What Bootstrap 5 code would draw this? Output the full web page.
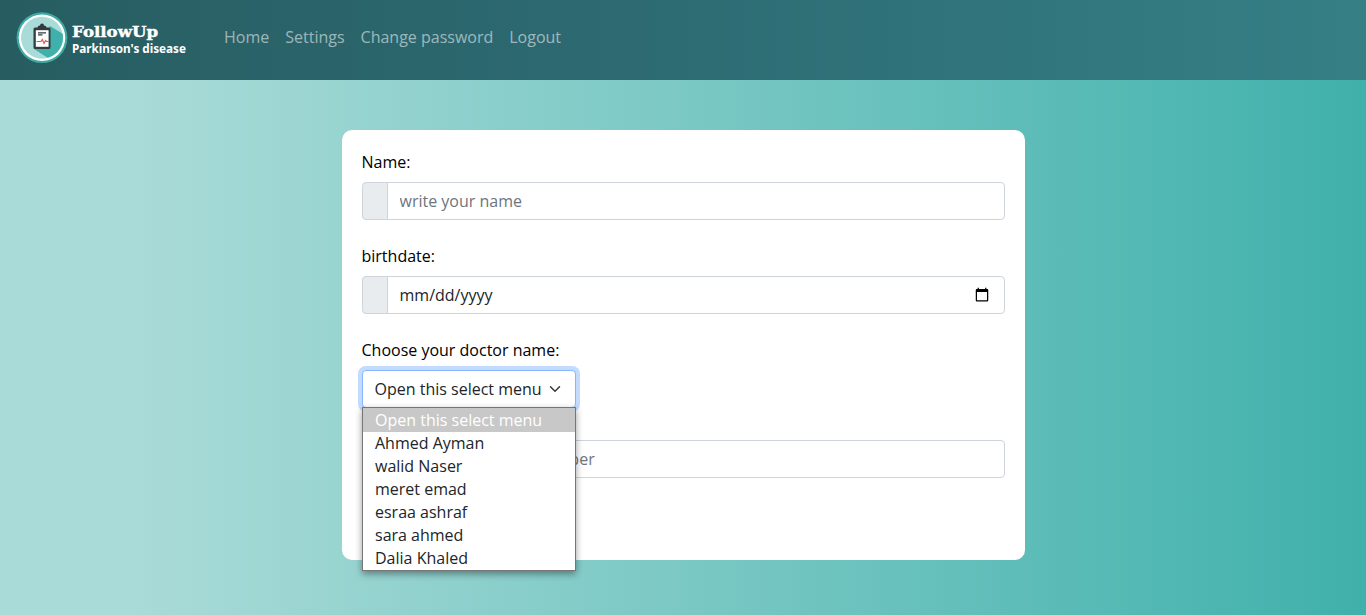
<!DOCTYPE html>
<html lang="en">
<head>
<meta charset="utf-8">
<meta name="viewport" content="width=device-width, initial-scale=1">
<title>FollowUp - Parkinson's disease</title>
<link href="https://cdn.jsdelivr.net/npm/bootstrap@5.3.0/dist/css/bootstrap.min.css" rel="stylesheet">
<style>
body{font-family:"Open Sans","Noto Sans",sans-serif;min-height:615px;overflow:hidden;background:linear-gradient(90deg,#a9dbd8 0,#a9dbd8 10%,#4bb5b0 91%,#40b0aa 100%)}
.top-bar{height:80px;background:linear-gradient(90deg,#275d61,#2d6a72 45%,#357f85)}
.logo{width:174px;height:52px;margin-left:4px;margin-top:-5px}
.top-bar .nav-link{color:rgba(255,255,255,.55);margin-top:-6px}
.main-links{margin-left:26px}
.panel{width:683px;height:430px;margin-top:50px;padding:20px;border-radius:10px;color:#000}
.panel .form-label{display:block}
.panel .input-group{margin-bottom:24px}
.panel .form-control,.panel .input-group-text,.picker{border-color:#ced4da;height:38px;border-radius:4px}
.panel .input-group-text{background:#e9ecef;width:26px}
.panel .form-control::placeholder{color:#6c757d}
.picker{width:214px;color:#212529;border:1px solid #86b7fe;box-shadow:0 0 0 4px rgba(13,110,253,.25)}
.picker svg{margin-left:7px}
.options{top:37px;left:0;width:214px;border:1px solid #767676;box-shadow:0 3px 7px rgba(0,0,0,.4);z-index:5;color:#212529}
.options li{height:23px;line-height:23px;padding-left:12.5px}
.options li:first-child{height:24px;line-height:25px;background:#c8c8c8;color:#fff}
</style>
</head>
<body>
<nav class="top-bar d-flex align-items-center px-2">
  <a class="ms-1 d-block" href="#" aria-label="FollowUp">
    <svg class="logo d-block" viewBox="0 0 174 52">
      <defs><clipPath id="disc"><circle cx="26" cy="25.700" r="21"/></clipPath></defs>
      <circle cx="26" cy="25.700" r="25.400" fill="#40a9a3"/>
      <circle cx="26" cy="25.700" r="23.300" fill="#fff"/>
      <circle cx="26" cy="25.700" r="21" fill="#a9dbd8"/>
      <path d="M34 14 L48 22.500 L54 40 L40 52 L32 46 L18 37Z" fill="#40b0aa" clip-path="url(#disc)"/>
      <path d="M19 15.500h2.500q0-2 2.500-2 0-2 2-2t2 2q2.500 0 2.500 2H33q1.500 0 1.500 1.500v18.500q0 1.500-1.500 1.500H19q-1.500 0-1.500-1.500V17q0-1.500 1.500-1.500" fill="#333b3f"/>
      <path d="M19.800 18.200h12.800v16.600H19.800z" fill="#fff"/>
      <path d="M22 20.800h8M22 22.900h4.500" stroke="#333b3f" stroke-width="1.200"/>
      <path d="M20.500 29.500h4.500l1.300-2 1.700 4 1.500-3 1 1h2" fill="none" stroke="#e8504a" stroke-width="1.100"/>
      <text x="56" y="24.500" textLength="86" lengthAdjust="spacingAndGlyphs" font-family="DejaVu Serif,serif" font-weight="bold" font-size="15" fill="#fff" stroke="#fff" stroke-width=".4">FollowUp</text>
      <text x="56" y="41" textLength="114" lengthAdjust="spacingAndGlyphs" font-family="Noto Sans,sans-serif" font-weight="bold" font-size="12" fill="#fff">Parkinson's disease</text>
    </svg>
  </a>
  <ul class="nav flex-row main-links">
    <li><a class="nav-link px-2" href="#">Home</a></li>
    <li><a class="nav-link px-2" href="#">Settings</a></li>
    <li><a class="nav-link px-2" href="#">Change password</a></li>
    <li><a class="nav-link px-2" href="#">Logout</a></li>
  </ul>
</nav>
<main class="panel bg-white mx-auto">
  <label class="form-label" for="name">Name:</label>
  <div class="input-group"><span class="input-group-text"></span><input id="name" class="form-control" placeholder="write your name"></div>
  <label class="form-label" for="birth">birthdate:</label>
  <div class="input-group"><span class="input-group-text"></span><input id="birth" type="date" class="form-control"></div>
  <label class="form-label">Choose your doctor name:</label>
  <div class="position-relative">
    <div class="picker bg-white d-flex align-items-center ps-2">
      <span class="ms-1">Open this select menu</span>
      <svg width="12" height="12" viewBox="0 0 16 16" fill="none" stroke="#343a40" stroke-width="2" stroke-linecap="round" stroke-linejoin="round"><path d="m2 5 6 6 6-6"/></svg>
    </div>
    <ul class="options position-absolute bg-white list-unstyled mb-0">
      <li>Open this select menu</li><li>Ahmed Ayman</li><li>walid Naser</li><li>meret emad</li><li>esraa ashraf</li><li>sara ahmed</li><li>Dalia Khaled</li>
    </ul>
  </div>
  <div class="input-group mt-4 pt-2"><span class="input-group-text"></span><input class="form-control" placeholder="write your mobile number" aria-label="mobile number"></div>
</main>
<script src="https://cdn.jsdelivr.net/npm/bootstrap@5.3.0/dist/js/bootstrap.bundle.min.js"></script>
</body>
</html>
